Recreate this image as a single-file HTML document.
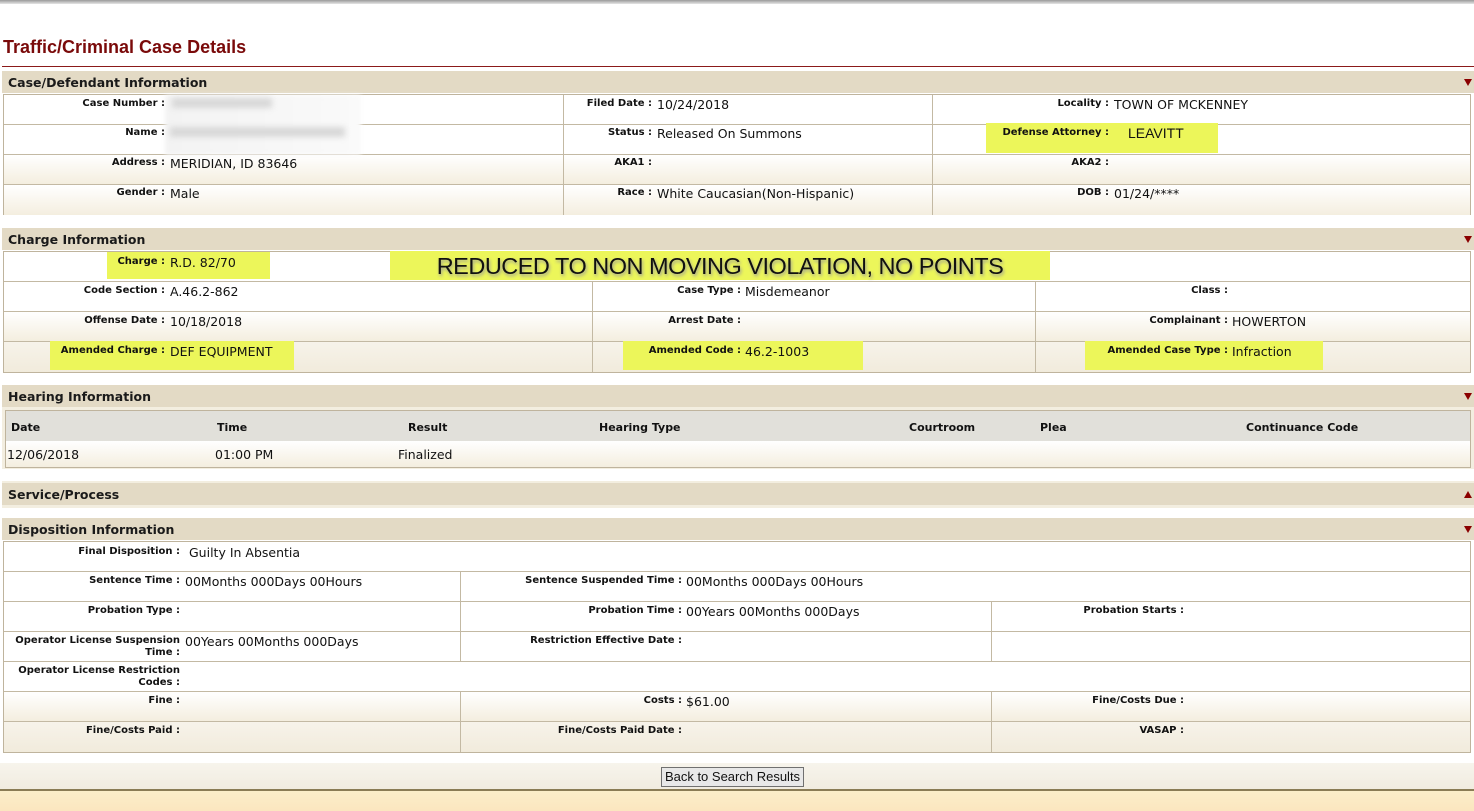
<!DOCTYPE html>
<html><head><meta charset="utf-8"><style>
*{margin:0;padding:0;box-sizing:border-box}
body{width:1474px;height:811px;overflow:hidden;background:#fff;position:relative;font-family:"DejaVu Sans",Verdana,sans-serif;color:#111}
.a{position:absolute}
.hd{position:absolute;left:2px;width:1472px;height:22px;background:#e3dac5;font:bold 12.5px "DejaVu Sans",sans-serif;color:#1a1a1a;padding:4px 0 0 6px}
.tri{position:absolute;right:2px;top:8px;width:0;height:0;border-left:4px solid transparent;border-right:4px solid transparent;border-top:7px solid #8b0000}
.up{border-top:none;border-bottom:7px solid #8b0000}
.tb{position:absolute;left:3px;width:1468px;border:1px solid #bfb49d;border-top:1px solid #bfb49d}
.row{position:absolute;left:0;width:1466px;height:30px;border-bottom:1px solid #c3b9a3}
.g{background:linear-gradient(#fff,#f4eedf)}
.vl{position:absolute;top:0;height:30px;border-left:1px solid #c3b9a3}
.l{position:absolute;top:4px;text-align:right;font:bold 10px "DejaVu Sans",sans-serif;color:#111;white-space:nowrap}
.v{position:absolute;top:3px;font-size:12.5px;white-space:nowrap}
.hl{position:absolute;background:#ecf65a}
</style></head><body>
<div class="a" style="left:0;top:0;width:1474px;height:4px;background:linear-gradient(#9a9a9a,#e6e6e6)"></div>
<div class="a" style="left:3px;top:37px;font:bold 18px 'Liberation Sans',Arial,sans-serif;color:#7a0a0a">Traffic/Criminal Case Details</div>
<div class="a" style="left:2px;top:66px;width:1472px;height:1px;background:#8b1a1a"></div>

<!-- Case/Defendant -->
<div class="hd" style="top:71px">Case/Defendant Information<div class="tri"></div></div>
<div class="tb" style="top:94px;height:121px;background:transparent">
 <div class="row" style="top:0"><div class="vl" style="left:559px"></div><div class="vl" style="left:928px"></div></div>
 <div class="row" style="top:30px"><div class="vl" style="left:559px"></div><div class="vl" style="left:928px"></div></div>
 <div class="row g" style="top:60px"><div class="vl" style="left:559px"></div><div class="vl" style="left:928px"></div></div>
 <div class="row g" style="top:90px;border-bottom:none"><div class="vl" style="left:559px"></div><div class="vl" style="left:928px"></div></div>
</div>
<div class="hl" style="left:986px;top:123px;width:232px;height:30px"></div>
<div class="a" style="left:165px;top:95px;width:196px;height:60px;background:linear-gradient(90deg,#f3f3f3,#fafafa);filter:blur(2px)"></div>
<div class="a" style="left:172px;top:98px;width:100px;height:10px;background:#d8d8d8;filter:blur(3px)"></div>
<div class="a" style="left:170px;top:127px;width:175px;height:10px;background:#d8d8d8;filter:blur(3px)"></div>
<div class="l" style="left:0;width:165px;top:98px">Case Number :</div>
<div class="l" style="left:0;width:165px;top:127px">Name :</div>
<div class="l" style="left:0;width:165px;top:157px">Address :</div><div class="v" style="left:170px;top:156px">MERIDIAN, ID 83646</div>
<div class="l" style="left:0;width:165px;top:187px">Gender :</div><div class="v" style="left:170px;top:186px">Male</div>
<div class="l" style="left:0;width:652px;top:98px">Filed Date :</div><div class="v" style="left:657px;top:97px">10/24/2018</div>
<div class="l" style="left:0;width:652px;top:127px">Status :</div><div class="v" style="left:657px;top:126px">Released On Summons</div>
<div class="l" style="left:0;width:652px;top:157px">AKA1 :</div>
<div class="l" style="left:0;width:652px;top:187px">Race :</div><div class="v" style="left:657px;top:186px">White Caucasian(Non-Hispanic)</div>
<div class="l" style="left:0;width:1109px;top:98px">Locality :</div><div class="v" style="left:1114px;top:97px">TOWN OF MCKENNEY</div>
<div class="l" style="left:0;width:1109px;top:127px">Defense Attorney :</div><div class="v" style="left:1128px;top:125px;font-family:'Liberation Sans',sans-serif;font-size:14px">LEAVITT</div>
<div class="l" style="left:0;width:1109px;top:157px">AKA2 :</div>
<div class="l" style="left:0;width:1109px;top:187px">DOB :</div><div class="v" style="left:1114px;top:186px">01/24/****</div>

<!-- Charge -->
<div class="hd" style="top:228px">Charge Information<div class="tri"></div></div>
<div class="tb" style="top:251px;height:122px">
 <div class="row" style="top:0"></div>
 <div class="row" style="top:30px"><div class="vl" style="left:588px"></div><div class="vl" style="left:1031px"></div></div>
 <div class="row g" style="top:60px"><div class="vl" style="left:588px"></div><div class="vl" style="left:1031px"></div></div>
 <div class="row g" style="top:90px;border-bottom:none;background:linear-gradient(#f7f3ea,#f1ebdc)"><div class="vl" style="left:588px"></div><div class="vl" style="left:1031px"></div></div>
</div>
<div class="hl" style="left:107px;top:252px;width:163px;height:27px"></div>
<div class="hl" style="left:390px;top:251px;width:660px;height:29px"></div>
<div class="hl" style="left:50px;top:341px;width:244px;height:29px"></div>
<div class="hl" style="left:623px;top:341px;width:240px;height:29px"></div>
<div class="hl" style="left:1085px;top:341px;width:238px;height:29px"></div>
<div class="a" style="left:390px;top:253px;width:660px;text-align:center;font:23.5px 'Liberation Sans',Arial,sans-serif;color:#111;text-shadow:1px 2px 3px #999;letter-spacing:-0.5px">REDUCED TO NON MOVING VIOLATION, NO POINTS</div>
<div class="l" style="left:0;width:165px;top:256px">Charge :</div><div class="v" style="left:170px;top:255px">R.D. 82/70</div>
<div class="l" style="left:0;width:165px;top:285px">Code Section :</div><div class="v" style="left:170px;top:284px">A.46.2-862</div>
<div class="l" style="left:0;width:165px;top:315px">Offense Date :</div><div class="v" style="left:170px;top:314px">10/18/2018</div>
<div class="l" style="left:0;width:165px;top:345px">Amended Charge :</div><div class="v" style="left:170px;top:344px">DEF EQUIPMENT</div>
<div class="l" style="left:0;width:741px;top:285px">Case Type :</div><div class="v" style="left:745px;top:284px">Misdemeanor</div>
<div class="l" style="left:0;width:741px;top:315px">Arrest Date :</div>
<div class="l" style="left:0;width:741px;top:345px">Amended Code :</div><div class="v" style="left:745px;top:344px">46.2-1003</div>
<div class="l" style="left:0;width:1228px;top:285px">Class :</div>
<div class="l" style="left:0;width:1228px;top:315px">Complainant :</div><div class="v" style="left:1232px;top:314px">HOWERTON</div>
<div class="l" style="left:0;width:1228px;top:345px">Amended Case Type :</div><div class="v" style="left:1232px;top:344px">Infraction</div>

<!-- Hearing -->
<div class="hd" style="top:385px">Hearing Information<div class="tri"></div></div>
<div class="a" style="left:2px;top:407px;width:1472px;height:62px;background:#f3eee0"></div>
<div class="a" style="left:5px;top:410px;width:1466px;height:32px;background:#e1e0da;border:1px solid #bfb49d;font:bold 11px 'DejaVu Sans',sans-serif">
<span class="a" style="left:5px;top:10px">Date</span><span class="a" style="left:211px;top:10px">Time</span><span class="a" style="left:402px;top:10px">Result</span><span class="a" style="left:593px;top:10px">Hearing Type</span><span class="a" style="left:903px;top:10px">Courtroom</span><span class="a" style="left:1034px;top:10px">Plea</span><span class="a" style="left:1240px;top:10px">Continuance Code</span></div>
<div class="a" style="left:5px;top:441px;width:1466px;height:27px;background:linear-gradient(#fff,#f4eedf);border:1px solid #bfb49d;border-top:none;font-size:12.5px">
<span class="a" style="left:1px;top:6px">12/06/2018</span><span class="a" style="left:209px;top:6px">01:00 PM</span><span class="a" style="left:392px;top:6px">Finalized</span></div>

<!-- Service -->
<div class="a" style="left:2px;top:481px;width:1472px;height:27px;background:#f3eee0"></div>
<div class="hd" style="top:483px">Service/Process<div class="tri up"></div></div>

<!-- Disposition -->
<div class="hd" style="top:518px">Disposition Information<div class="tri"></div></div>
<div class="tb" style="top:541px;height:212px">
 <div class="row" style="top:0"></div>
 <div class="row" style="top:30px"><div class="vl" style="left:456px"></div></div>
 <div class="row" style="top:60px"><div class="vl" style="left:456px"></div><div class="vl" style="left:987px"></div></div>
 <div class="row" style="top:90px"><div class="vl" style="left:456px"></div><div class="vl" style="left:987px"></div></div>
 <div class="row" style="top:120px"></div>
 <div class="row g" style="top:150px"><div class="vl" style="left:456px"></div><div class="vl" style="left:987px"></div></div>
 <div class="row g" style="top:180px;border-bottom:none;background:linear-gradient(#f7f3ea,#f1ebdc)"><div class="vl" style="left:456px"></div><div class="vl" style="left:987px"></div></div>
</div>
<div class="l" style="left:0;width:180px;top:546px">Final Disposition :</div><div class="v" style="left:189px;top:545px">Guilty In Absentia</div>
<div class="l" style="left:0;width:180px;top:575px">Sentence Time :</div><div class="v" style="left:185px;top:574px">00Months 000Days 00Hours</div>
<div class="l" style="left:0;width:180px;top:605px">Probation Type :</div>
<div class="l" style="left:0;width:180px;top:635px;line-height:12px">Operator License Suspension<br>Time :</div><div class="v" style="left:185px;top:634px">00Years 00Months 000Days</div>
<div class="l" style="left:0;width:180px;top:665px;line-height:12px">Operator License Restriction<br>Codes :</div>
<div class="l" style="left:0;width:180px;top:695px">Fine :</div>
<div class="l" style="left:0;width:180px;top:725px">Fine/Costs Paid :</div>
<div class="l" style="left:0;width:682px;top:575px">Sentence Suspended Time :</div><div class="v" style="left:686px;top:574px">00Months 000Days 00Hours</div>
<div class="l" style="left:0;width:682px;top:605px">Probation Time :</div><div class="v" style="left:686px;top:604px">00Years 00Months 000Days</div>
<div class="l" style="left:0;width:682px;top:635px">Restriction Effective Date :</div>
<div class="l" style="left:0;width:682px;top:695px">Costs :</div><div class="v" style="left:686px;top:694px">$61.00</div>
<div class="l" style="left:0;width:682px;top:725px">Fine/Costs Paid Date :</div>
<div class="l" style="left:0;width:1184px;top:605px">Probation Starts :</div>
<div class="l" style="left:0;width:1184px;top:695px">Fine/Costs Due :</div>
<div class="l" style="left:0;width:1184px;top:725px">VASAP :</div>

<!-- bottom -->
<div class="a" style="left:0;top:763px;width:1474px;height:26px;background:linear-gradient(#f7f4ec,#f1ece0)"></div>
<div class="a" style="left:661px;top:767px;width:143px;height:20px;background:#e8e8e8;border:1px solid #707070;font:13px 'Liberation Sans',Arial,sans-serif;text-align:center;line-height:18px;color:#111">Back to Search Results</div>
<div class="a" style="left:0;top:789px;width:1474px;height:2px;background:#8a7c55"></div>
<div class="a" style="left:0;top:791px;width:1474px;height:20px;background:linear-gradient(#fbeec9,#fbe6bf)"></div>
</body></html>
